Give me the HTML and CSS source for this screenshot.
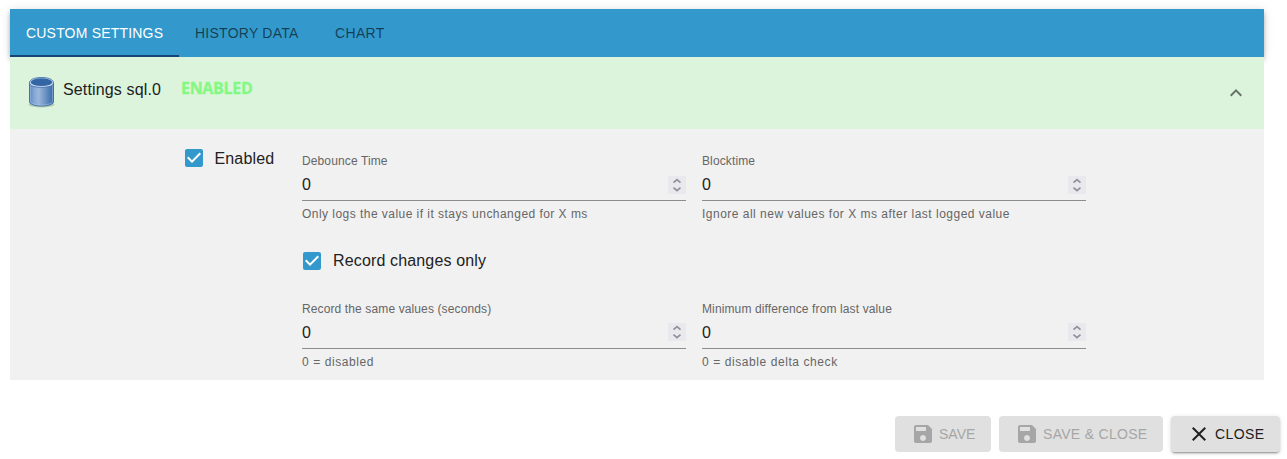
FILE: index.html
```html
<!DOCTYPE html>
<html lang="en">
<head>
<meta charset="utf-8">
<title>Custom settings</title>
<link rel="stylesheet" href="styles.css">
</head>
<body>
<svg width="0" height="0" class="defs">
  <defs>
    <linearGradient id="side" x1="0" x2="1" y1="0" y2="0">
      <stop offset="0" stop-color="#5a88c2"/><stop offset=".2" stop-color="#85a8d4"/><stop offset=".38" stop-color="#9ab7db"/><stop offset="1" stop-color="#3567a8"/>
    </linearGradient>
    <symbol id="check" viewBox="0 0 24 24"><path d="M19 3H5c-1.11 0-2 .9-2 2v14c0 1.1.89 2 2 2h14c1.11 0 2-.9 2-2V5c0-1.1-.89-2-2-2zm-9 14l-5-5 1.41-1.41L10 14.17l7.59-7.59L19 8l-9 9z"/></symbol>
    <symbol id="save" viewBox="0 0 24 24"><path d="M17 3H5c-1.11 0-2 .9-2 2v14c0 1.1.89 2 2 2h14c1.1 0 2-.9 2-2V7l-4-4zm-5 16c-1.66 0-3-1.34-3-3s1.34-3 3-3 3 1.34 3 3-1.34 3-3 3zm3-10H5V5h10v4z"/></symbol>
    <symbol id="spin" viewBox="0 0 18 18"><path d="M5.500 6.700 9 3.700l3.500 3M5.500 11.600 9 14.600l3.500-3" fill="none" stroke="#8f8f9d" stroke-width="1.700"/></symbol>
  </defs>
</svg>
<main class="panel">
  <nav class="tabs">
    <div class="tab tab-active">CUSTOM SETTINGS</div>
    <div class="tab tab-history">HISTORY DATA</div>
    <div class="tab">CHART</div>
  </nav>
  <section class="summary">
    <svg class="db" viewBox="0 0 32 32">
      <ellipse cx="16.500" cy="28.500" rx="13" ry="3" fill="#5c7550" opacity=".3"/>
      <path d="M4.500 7v18.800c0 2.200 4.600 4.200 12 4.200s12-2 12-4.200V7z" fill="url(#side)" stroke="#3c6caa"/>
      <path d="M5.400 8v17.300c0 2 4.800 3.800 11.100 3.800s11.100-1.800 11.100-3.800V8" fill="none" stroke="#a5c0e2" stroke-width=".6"/>
      <path d="M4.500 6.800c0-3 4.500-5.300 12-5.300s12 2.300 12 5.300-4.500 4.500-12 4.500-12-1.500-12-4.500z" fill="#d0e1f3" stroke="#3d6eac" stroke-width=".9"/>
      <ellipse cx="16.500" cy="6.200" rx="10.800" ry="3.900" fill="#3465a4"/>
    </svg>
    <span class="title">Settings sql.0</span>
    <span class="state">ENABLED</span>
    <svg class="chevron" viewBox="0 0 24 24"><path d="M12 8l-6 6 1.410 1.410L12 10.830l4.590 4.580L18 14z"/></svg>
  </section>
  <section class="details">
    <label class="check-row enabled"><svg><use href="#check"/></svg><span>Enabled</span></label>
    <div class="fields">
      <div class="field">
        <div class="label">Debounce Time</div>
        <div class="value"><span>0</span><svg><use href="#spin"/></svg></div>
        <div class="help help-debounce">Only logs the value if it stays unchanged for X ms</div>
      </div>
      <div class="field">
        <div class="label">Blocktime</div>
        <div class="value"><span>0</span><svg><use href="#spin"/></svg></div>
        <div class="help">Ignore all new values for X ms after last logged value</div>
      </div>
      <label class="check-row record"><svg><use href="#check"/></svg><span>Record changes only</span></label>
      <div class="field lower">
        <div class="label">Record the same values (seconds)</div>
        <div class="value"><span>0</span><svg><use href="#spin"/></svg></div>
        <div class="help help-short">0 = disabled</div>
      </div>
      <div class="field lower">
        <div class="label">Minimum difference from last value</div>
        <div class="value"><span>0</span><svg><use href="#spin"/></svg></div>
        <div class="help help-short">0 = disable delta check</div>
      </div>
    </div>
  </section>
</main>
<footer class="actions">
  <div class="button b-save disabled"><svg><use href="#save"/></svg><span>SAVE</span></div>
  <div class="button b-both disabled"><svg><use href="#save"/></svg><span>SAVE &amp; CLOSE</span></div>
  <div class="button b-close"><svg viewBox="0 0 24 24"><path d="M19 6.410L17.590 5 12 10.590 6.410 5 5 6.410 10.590 12 5 17.590 6.410 19 12 13.410 17.590 19 19 17.590 13.410 12z"/></svg><span>CLOSE</span></div>
</footer>
</body>
</html>
```

FILE: styles.css
```css
* { box-sizing: border-box; }
body { margin: 0; padding-top: 9px; height: 459px; overflow: hidden; background: #fff; color: #212121; font-family: "Liberation Sans", Arial, sans-serif; }
.defs { position: absolute; }
svg { display: block; flex: none; }
.panel { width: 1254px; margin-left: 10px; }
.tabs { display: flex; height: 48px; background: #3399cc; box-shadow: 0 2px 4px -1px rgba(0,0,0,.2), 0 4px 5px rgba(0,0,0,.14), 0 1px 10px rgba(0,0,0,.12); }
.tab { padding: 0 16px; line-height: 48px; font-size: 14px; letter-spacing: .35px; color: rgba(0,0,0,.6); white-space: nowrap; }
.tab-history { width: 140px; letter-spacing: .25px; }
.tab-active { width: 169px; letter-spacing: .19px; color: #fff; border-bottom: 2px solid #164477; }
.summary { position: relative; display: flex; height: 72px; background: #dcf4dc; padding-left: 15px; align-items: flex-start; white-space: nowrap; }
.db { width: 32px; height: 32px; margin: 19px 1px 0 0; }
.title { width: 123px; padding-left: 5px; font-size: 16px; line-height: 24px; letter-spacing: .14px; margin-top: 21px; }
.state { font: 700 16px/24px "Open Sans", sans-serif; letter-spacing: -.3px; color: #84f884; -webkit-text-stroke: .3px #84f884; margin-top: 19px; }
.chevron { width: 24px; height: 24px; margin: 24px 16px 0 auto; fill: #667066; }
.details { display: flex; height: 251px; background: #f1f1f1; }
.check-row { display: flex; align-items: center; height: 24px; font-size: 16px; letter-spacing: .15px; white-space: nowrap; }
.check-row svg { width: 24px; height: 24px; fill: #3399cc; background: linear-gradient(#fff,#fff) center / 14px 14px no-repeat; }
.check-row span { margin-left: 9px; }
.enabled { width: 120px; margin: 17px 0 0 172px; }
.enabled span { margin-left: 8.5px; padding-top: 2px; }
.fields { display: grid; grid-template-columns: 384px 384px; grid-template-rows: 68px 54px 68px; column-gap: 16px; row-gap: 13px; padding-top: 24px; }
.record { grid-column: 1 / 3; margin: 15px 0 0 -2px; }
.label { font-size: 12px; line-height: 16px; letter-spacing: .12px; color: #666; }
.value { display: flex; justify-content: space-between; height: 32px; padding-top: 7px; border-bottom: 1px solid #8d8d8d; font-size: 16px; line-height: 18px; }
.value svg { width: 18px; height: 18px; background: #e9e9ed; }
.lower .value svg { margin-top: -1px; }
.help { font-size: 12px; line-height: 20px; margin-top: 3px; letter-spacing: .49px; color: #666; white-space: nowrap; }
.help-debounce { letter-spacing: .46px; }
.help-short { letter-spacing: .58px; }
.actions { display: flex; gap: 8px; justify-content: flex-end; padding: 36px 7px 0 0; }
.button { display: flex; height: 36px; align-items: center; padding-left: 16px; border-radius: 4px; background: #e0e0e0; font-size: 14px; letter-spacing: .4px; white-space: nowrap; }
.button svg { width: 24px; height: 24px; fill: currentColor; }
.button span { margin-left: 4px; }
.disabled { color: #a6a6a6; }
.b-save { width: 96px; letter-spacing: 0; }
.b-both { width: 164px; letter-spacing: .3px; }
.b-close { width: 109px; box-shadow: 0 3px 1px -2px rgba(0,0,0,.2), 0 2px 2px rgba(0,0,0,.14), 0 1px 5px rgba(0,0,0,.12); }
```
